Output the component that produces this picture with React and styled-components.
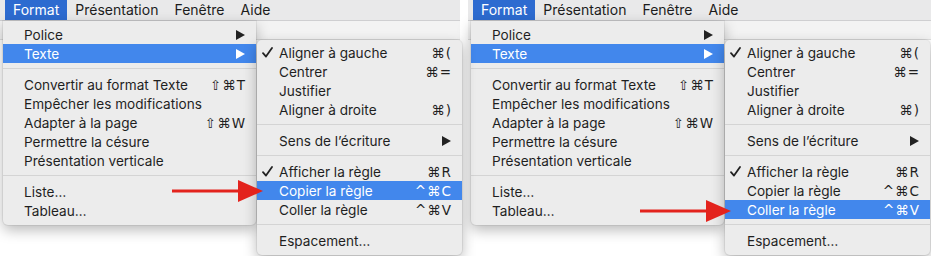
import React from 'react';
import styled, { createGlobalStyle } from 'styled-components';

const GlobalStyle = createGlobalStyle`
  body {
    margin: 0;
    background: #ffffff;
    font-family: Inter, "Noto Sans", "DejaVu Sans", sans-serif;
  }
`

const Screen = styled.div`
  display: flex;
  gap: 8px;
  width: 931px;
  height: 256px;
  overflow: hidden;
`
const Panel = styled.div`
  position: relative;
  width: ${p => p.$width}px;
  height: 256px;
  flex-shrink: 0;
`
const MenuBar = styled.div`
  display: flex;
  height: 20px;
  padding-left: 5px;
  background: #e9e9ea;
  border-bottom: 1px solid #cfcfd1;
`
const BarItem = styled.div`
  padding: 0 8px;
  line-height: 20px;
  font-size: 14px;
  color: ${p => (p.$active ? '#ffffff' : '#1c1c1c')};
  background: ${p => (p.$active ? '#2d6bd0' : 'transparent')};
`
const Toolbar = styled.div`
  height: 18px;
  background: #f3f3f3;
  border-bottom: 1px solid #dedede;
`
const Menu = styled.div`
  position: absolute;
  top: ${p => p.$top}px;
  left: ${p => p.$left}px;
  width: ${p => p.$width}px;
  padding: ${p => p.$padTop}px 0 5px;
  background: #ececec;
  border-radius: ${p => (p.$sub ? '5px' : '0 0 5px 5px')};
  box-shadow: 0 0 0 1px rgba(0, 0, 0, 0.06), 0 5px 14px rgba(0, 0, 0, 0.28);
  z-index: ${p => (p.$sub ? 2 : 1)};
`
const Item = styled.div`
  display: flex;
  align-items: center;
  height: 19px;
  padding: 0 11px 0 0;
  font-size: 13.6px;
  color: ${p => (p.$active ? '#ffffff' : '#1f1f1f')};
  background: ${p => (p.$active ? '#4287ec' : 'transparent')};
`
const Check = styled.span`
  display: flex;
  align-items: center;
  width: ${p => p.$gutter}px;
  height: 19px;
  flex-shrink: 0;
  padding-left: 5px;
  box-sizing: border-box;
`
const Label = styled.span`
  flex: 1;
  white-space: nowrap;
`
const Shortcut = styled.span`
  font-family: "DejaVu Sans", sans-serif;
  font-size: 13.5px;
  letter-spacing: 1px;
  margin-right: -1px;
`
const Separator = styled.div`
  height: 1px;
  margin: 5px 0 6px;
  background: #d4d4d4;
`
const ArrowMark = styled.svg`
  position: absolute;
  left: 172px;
  top: ${p => p.$top}px;
  z-index: 3;
`

const mainItems = [
  { label: 'Police', sub: true },
  { label: 'Texte', sub: true, active: true },
  'sep',
  { label: 'Convertir au format Texte', key: '⇧⌘T' },
  { label: 'Empêcher les modifications' },
  { label: 'Adapter à la page', key: '⇧⌘W' },
  { label: 'Permettre la césure' },
  { label: 'Présentation verticale' },
  'sep',
  { label: 'Liste…' },
  { label: 'Tableau…' },
]

const textItems = [
  { label: 'Aligner à gauche', key: '⌘(', check: true },
  { label: 'Centrer', key: '⌘=' },
  { label: 'Justifier' },
  { label: 'Aligner à droite', key: '⌘)' },
  'sep',
  { label: 'Sens de l’écriture', sub: true },
  'sep',
  { label: 'Afficher la règle', key: '⌘R', check: true },
  { label: 'Copier la règle', key: '^⌘C' },
  { label: 'Coller la règle', key: '^⌘V' },
  'sep',
  { label: 'Espacement…' },
]

const SubArrow = ({ color }) => (
  <svg width="9" height="10" viewBox="0 0 9 10">
    <path d="M0 0 L9 5 L0 10 Z" fill={color} />
  </svg>
)

const CheckIcon = ({ color }) => (
  <svg width="11" height="11" viewBox="0 0 11 11">
    <path d="M1 6.2 L4 9.6 L10 1" fill="none" stroke={color} strokeWidth="1.8" strokeLinecap="round" strokeLinejoin="round" />
  </svg>
)

const MenuList = ({ items, gutter, activeLabel }) =>
  items.map((it, i) => {
    if (it === 'sep') return <Separator key={i} />
    const active = it.active || it.label === activeLabel
    const ink = active ? '#ffffff' : '#222222'
    return (
      <Item key={i} $active={active}>
        <Check $gutter={gutter}>{it.check && <CheckIcon color={ink} />}</Check>
        <Label>{it.label}</Label>
        {it.key && <Shortcut>{it.key}</Shortcut>}
        {it.sub && <SubArrow color={ink} />}
      </Item>
    )
  })

const RedArrow = ({ top }) => (
  <ArrowMark $top={top} width="92" height="22" viewBox="0 0 92 22">
    <rect x="0" y="9.5" width="68" height="3" fill="#e3231d" />
    <path d="M66 0 L91 11 L66 22 Z" fill="#e3231d" />
  </ArrowMark>
)

const MenuScene = ({ width, activeLabel, arrowTop }) => (
  <Panel $width={width}>
    <MenuBar>
      <BarItem $active>Format</BarItem>
      <BarItem>Présentation</BarItem>
      <BarItem>Fenêtre</BarItem>
      <BarItem>Aide</BarItem>
    </MenuBar>
    <Toolbar />
    <Menu $top={21} $left={3} $width={253} $padTop={4}>
      <MenuList items={mainItems} gutter={21} />
    </Menu>
    <Menu $sub $top={40} $left={257} $width={205} $padTop={3}>
      <MenuList items={textItems} gutter={22} activeLabel={activeLabel} />
    </Menu>
    <RedArrow top={arrowTop} />
  </Panel>
)

const App = () => (
  <>
    <GlobalStyle />
    <Screen>
      <MenuScene width={460} activeLabel="Copier la règle" arrowTop={180} />
      <MenuScene width={463} activeLabel="Coller la règle" arrowTop={200} />
    </Screen>
  </>
)

export default App;
